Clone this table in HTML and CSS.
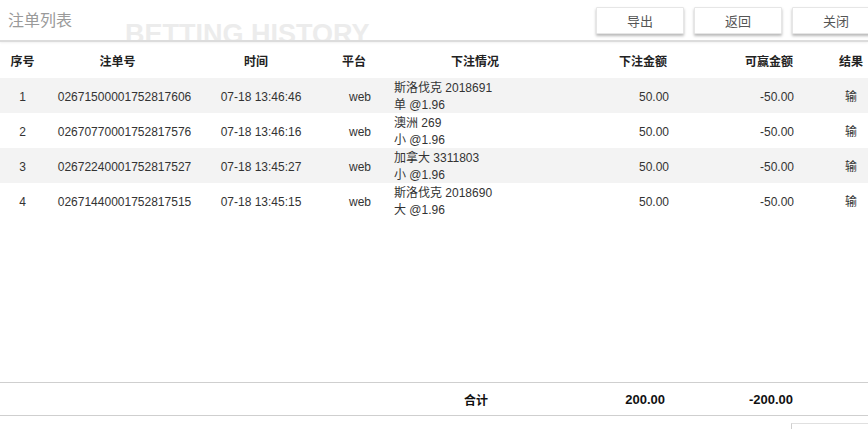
FILE: index.html
```html
<!DOCTYPE html>
<html lang="zh">
<head>
<meta charset="utf-8">
<title>注单列表</title>
<link rel="stylesheet" href="styles.css">
</head>
<body>
<div class="page">
  <header class="topbar">
    <h1 class="title">注单列表</h1>
    <span class="watermark">BETTING HISTORY</span>
    <div class="actions">
      <button class="btn">导出</button>
      <button class="btn">返回</button>
      <button class="btn">关闭</button>
    </div>
  </header>

  <div class="row head">
    <div class="c c1">序号</div>
    <div class="c c2">注单号</div>
    <div class="c c3">时间</div>
    <div class="c c4">平台</div>
    <div class="c c5">下注情况</div>
    <div class="c c6">下注金额</div>
    <div class="c c7">可赢金额</div>
    <div class="c c8">结果</div>
  </div>

  <div class="list">
    <div class="row data odd">
      <div class="c c1">1</div>
      <div class="c c2">02671500001752817606</div>
      <div class="c c3">07-18 13:46:46</div>
      <div class="c c4">web</div>
      <div class="c c5">斯洛伐克 2018691<br>单 @1.96</div>
      <div class="c c6">50.00</div>
      <div class="c c7">-50.00</div>
      <div class="c c8">输</div>
    </div>
    <div class="row data">
      <div class="c c1">2</div>
      <div class="c c2">02670770001752817576</div>
      <div class="c c3">07-18 13:46:16</div>
      <div class="c c4">web</div>
      <div class="c c5">澳洲 269<br>小 @1.96</div>
      <div class="c c6">50.00</div>
      <div class="c c7">-50.00</div>
      <div class="c c8">输</div>
    </div>
    <div class="row data odd">
      <div class="c c1">3</div>
      <div class="c c2">02672240001752817527</div>
      <div class="c c3">07-18 13:45:27</div>
      <div class="c c4">web</div>
      <div class="c c5">加拿大 3311803<br>小 @1.96</div>
      <div class="c c6">50.00</div>
      <div class="c c7">-50.00</div>
      <div class="c c8">输</div>
    </div>
    <div class="row data">
      <div class="c c1">4</div>
      <div class="c c2">02671440001752817515</div>
      <div class="c c3">07-18 13:45:15</div>
      <div class="c c4">web</div>
      <div class="c c5">斯洛伐克 2018690<br>大 @1.96</div>
      <div class="c c6">50.00</div>
      <div class="c c7">-50.00</div>
      <div class="c c8">输</div>
    </div>
  </div>

  <div class="row total">
    <div class="c c1"></div>
    <div class="c c2"></div>
    <div class="c c3"></div>
    <div class="c c4"></div>
    <div class="c c5">合计</div>
    <div class="c c6">200.00</div>
    <div class="c c7">-200.00</div>
    <div class="c c8"></div>
  </div>

  <div class="bottom">
    <span class="ghost-btn"></span>
  </div>
</div>
</body>
</html>
```

FILE: styles.css
```css
* { box-sizing: border-box; }
html, body {
  margin: 0;
  padding: 0;
  background: #fff;
  overflow: hidden;
}
body {
  font-family: "Liberation Sans", Arial, "Noto Sans CJK SC", sans-serif;
  font-size: 12px;
  color: #333;
}
.page {
  height: 429px;
  display: flex;
  flex-direction: column;
}
.topbar {
  position: relative;
  height: 42px;
  flex: none;
  display: flex;
  align-items: flex-start;
  border-bottom: 2px solid #dcdcdc;
  box-shadow: 0 1px 2px rgba(0,0,0,0.06);
  overflow: hidden;
}
.title {
  margin: 0;
  padding: 10px 0 0 8px;
  font-size: 16px;
  font-weight: normal;
  color: #9a9a9a;
  line-height: 22px;
}
.watermark {
  position: absolute;
  left: 125px;
  top: 19px;
  font-size: 27px;
  font-weight: bold;
  color: #ececec;
  line-height: 30px;
  white-space: nowrap;
}
.actions {
  margin-left: auto;
  margin-right: -12px;
  padding-top: 7px;
  display: flex;
  gap: 10px;
  position: relative;
}
.btn {
  width: 88px;
  height: 27px;
  background: #fff;
  border: 1px solid #e6e6e6;
  border-radius: 1px;
  box-shadow: 0 2px 3px rgba(0,0,0,0.28);
  font-family: "Liberation Sans", Arial, "Noto Sans CJK SC", sans-serif;
  font-size: 13px;
  color: #555;
  padding: 0;
}
.row {
  display: grid;
  grid-template-columns: 45px 155px 120px 72px 166px 122px 154px 1fr;
  align-items: center;
}
.head {
  height: 36px;
  flex: none;
  font-weight: bold;
  color: #222;
}
.data {
  height: 35px;
  line-height: 17px;
}
.data.odd { background: #f3f3f3; }
.data .c { padding-top: 2px; }
.list {
  flex: 1;
}
.c1, .c2, .c3, .c4, .c8 { text-align: center; }
.head .c2 { padding-right: 10px; }
.head .c3 { padding-right: 8px; }
.head .c4 { padding-right: 4px; }
.data .c2 { padding-left: 4px; }
.data .c3 { padding-left: 2px; }
.data .c4 { padding-left: 8px; }
.c5 { text-align: center; }
.data .c5 { text-align: left; padding-left: 2px; }
.c6 { text-align: right; padding-right: 13px; }
.data .c6 { padding-right: 11px; }
.c7 { text-align: right; padding-right: 40px; }
.head .c7 { padding-right: 41px; }
.total {
  height: 34px;
  flex: none;
  border-top: 1px solid #cfcfcf;
  border-bottom: 1px solid #cfcfcf;
  font-weight: bold;
  font-size: 13px;
  color: #111;
}
.total .c5 { padding-left: 2px; font-size: 12px; }
.total .c6 { padding-right: 15px; }
.total .c7 { padding-right: 41px; }
.bottom {
  height: 13px;
  flex: none;
  display: flex;
  justify-content: flex-end;
  align-items: flex-end;
}
.ghost-btn {
  width: 77px;
  height: 6px;
  border-top: 1px solid #e0e0e0;
  border-left: 1px solid #cfcfcf;
}
```
